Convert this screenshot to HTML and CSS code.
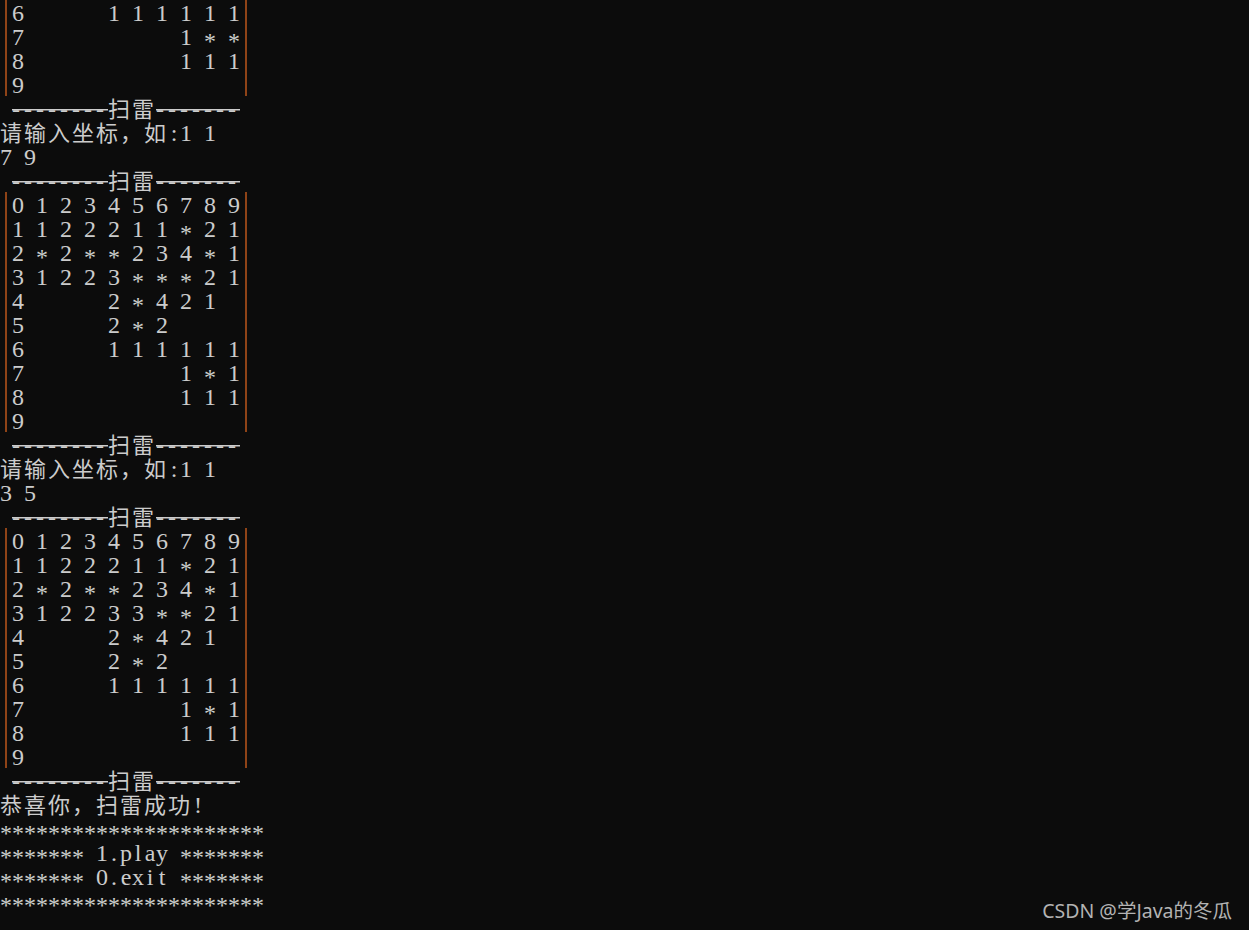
FILE: index.html
```html
<!DOCTYPE html>
<html lang="zh-CN">
<head>
  <meta charset="UTF-8" />
  <title>扫雷</title>
  <link rel="stylesheet" href="styles.css">
</head>
<body>
<div class="screen">
  <div class="board">
    <div class="ln">6       1 1 1 1 1 1</div>
    <div class="ln">7             1 <span class="st">*</span> <span class="st">*</span></div>
    <div class="ln">8             1 1 1</div>
    <div class="ln">9</div>
  </div>
  <div class="ln"> <span class="dash">--------</span><span class="cn">扫雷</span><span class="dash">-------</span></div>
  <div class="ln"><span class="cn">请输入坐标，如</span><span class="c">:</span>1 1</div>
  <div class="ln">7 9</div>
  <div class="ln"> <span class="dash">--------</span><span class="cn">扫雷</span><span class="dash">-------</span></div>

  <!-- 두 번째 판 -->
  <div class="board">
    <div class="ln">0 1 2 3 4 5 6 7 8 9</div>
    <div class="ln">1 1 2 2 2 1 1 <span class="st">*</span> 2 1</div>
    <div class="ln">2 <span class="st">*</span> 2 <span class="st">*</span> <span class="st">*</span> 2 3 4 <span class="st">*</span> 1</div>
    <div class="ln">3 1 2 2 3 <span class="st">*</span> <span class="st">*</span> <span class="st">*</span> 2 1</div>
    <div class="ln">4       2 <span class="st">*</span> 4 2 1</div>
    <div class="ln">5       2 <span class="st">*</span> 2</div>
    <div class="ln">6       1 1 1 1 1 1</div>
    <div class="ln">7             1 <span class="st">*</span> 1</div>
    <div class="ln">8             1 1 1</div>
    <div class="ln">9</div>
  </div>
  <div class="ln"> <span class="dash">--------</span><span class="cn">扫雷</span><span class="dash">-------</span></div>
  <div class="ln"><span class="cn">请输入坐标，如</span><span class="c">:</span>1 1</div>
  <div class="ln">3 5</div>
  <div class="ln"> <span class="dash">--------</span><span class="cn">扫雷</span><span class="dash">-------</span></div>

  <!-- 세 번째 판 -->
  <div class="board">
    <div class="ln">0 1 2 3 4 5 6 7 8 9</div>
    <div class="ln">1 1 2 2 2 1 1 <span class="st">*</span> 2 1</div>
    <div class="ln">2 <span class="st">*</span> 2 <span class="st">*</span> <span class="st">*</span> 2 3 4 <span class="st">*</span> 1</div>
    <div class="ln">3 1 2 2 3 3 <span class="st">*</span> <span class="st">*</span> 2 1</div>
    <div class="ln">4       2 <span class="st">*</span> 4 2 1</div>
    <div class="ln">5       2 <span class="st">*</span> 2</div>
    <div class="ln">6       1 1 1 1 1 1</div>
    <div class="ln">7             1 <span class="st">*</span> 1</div>
    <div class="ln">8             1 1 1</div>
    <div class="ln">9</div>
  </div>
  <div class="ln"> <span class="dash">--------</span><span class="cn">扫雷</span><span class="dash">-------</span></div>
  <div class="ln"><span class="cn">恭喜你，扫雷成功</span><span class="c">!</span></div>

  <!-- 메뉴 -->
  <div class="ln"><span class="st">**********************</span></div>
  <div class="ln"><span class="st">*******</span> 1<span class="c">.</span><span class="c">p</span><span class="c">l</span><span class="c">a</span><span class="c">y</span> <span class="st">*******</span></div>
  <div class="ln"><span class="st">*******</span> 0<span class="c">.</span><span class="c">e</span><span class="c">x</span><span class="c">i</span><span class="c">t</span> <span class="st">*******</span></div>
  <div class="ln"><span class="st">**********************</span></div>
</div>

<div class="mark">CSDN @学Java的冬瓜</div>
</body>
</html>
```

FILE: styles.css
```css
* { box-sizing: border-box; margin: 0; padding: 0; }
html, body {
  background: #0c0c0c;
}
body {
  color: #cccccc;
  font-family: 'Liberation Serif', 'Noto Sans CJK SC', serif;
  min-height: 930px;
}
.screen {
  font-size: 24px;
  word-spacing: 6px;
}
.ln {
  height: 24px;
  line-height: 26px;
  white-space: pre;
}
.board {
  width: 242px;
  margin-left: 5px;
  padding-left: 5px;
  border-left: 2px solid #8f4317;
  border-right: 2px solid #8f4317;
}
/* 한 칸짜리 글자 */
.c {
  display: inline-block;
  width: 12px;
  text-align: center;
}
.cn {
  font-family: 'Noto Sans CJK SC', sans-serif;
  font-size: 22px;
  letter-spacing: 2px;
  line-height: 20px;
}
.st {
  vertical-align: -4px;
  line-height: 18px;
}
.dash {
  letter-spacing: 4px;
  line-height: 16px;
  background: linear-gradient(#cccccc, #cccccc) no-repeat 0 13px / 100% 1.5px;
}

/* 워터마크 */
.mark {
  position: absolute;
  right: 17px;
  bottom: 7px;
  font-family: 'Noto Sans', 'Noto Sans CJK SC', sans-serif;
  font-size: 19.5px;
  line-height: 24px;
  color: #b3b3b3;
}
```
